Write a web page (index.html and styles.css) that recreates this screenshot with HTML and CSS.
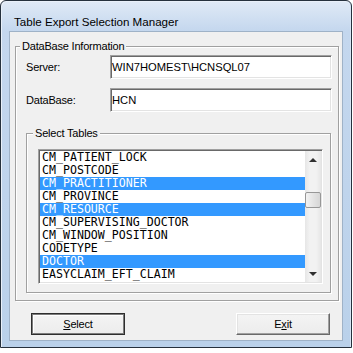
FILE: index.html
```html
<!DOCTYPE html>
<html lang="en">
<head>
    <meta charset="UTF-8">
    <title>Table Export Selection Manager</title>
    <link rel="stylesheet" href="styles.css">
</head>
<body>
    <div class="window">
        <div class="titlebar">Table Export Selection Manager</div>
        <div class="client">
            <div class="group group-db">
                <span class="group-title">DataBase Information</span>
                <div class="field field-server">
                    <label>Server:</label>
                    <div class="textbox">WIN7HOMEST\HCNSQL07</div>
                </div>
                <div class="field field-db">
                    <label>DataBase:</label>
                    <div class="textbox">HCN</div>
                </div>
                <div class="group group-tables">
                    <span class="group-title">Select Tables</span>
                    <div class="listbox">
                        <ul class="items">
                            <li>CM_PATIENT_LOCK</li>
                            <li>CM_POSTCODE</li>
                            <li class="selected">CM_PRACTITIONER</li>
                            <li>CM_PROVINCE</li>
                            <li class="selected">CM_RESOURCE</li>
                            <li>CM_SUPERVISING_DOCTOR</li>
                            <li>CM_WINDOW_POSITION</li>
                            <li>CODETYPE</li>
                            <li class="selected">DOCTOR</li>
                            <li>EASYCLAIM_EFT_CLAIM</li>
                        </ul>
                        <div class="scrollbar">
                            <div class="arrow"><span class="tri-up"></span></div>
                            <div class="track"><div class="thumb"></div></div>
                            <div class="arrow"><span class="tri-down"></span></div>
                        </div>
                    </div>
                </div>
            </div>
            <div class="buttons">
                <button class="btn btn-default"><u>S</u>elect</button>
                <button class="btn">E<u>x</u>it</button>
            </div>
        </div>
    </div>
</body>
</html>
```

FILE: styles.css
```css
body {
    margin: 0;
    background: #ffffff;
    font-family: "Liberation Sans", Arial, sans-serif;
}
.window {
    box-sizing: border-box;
    width: 352px;
    height: 348px;
    border: 1px solid #26313d;
    border-radius: 6px 6px 0 0;
    padding: 0 8px 6px 8px;
    background: linear-gradient(#e0eaf6, #c4d7ee 30px, #bad1ea);
    box-shadow: inset 1px 1px 0 #e9f0f9, inset -1px 0 0 #d6e3f2;
}
.titlebar {
    height: 30px;
    box-sizing: border-box;
    padding: 13px 0 0 5px;
    font-size: 11.6px;
    line-height: 15px;
    color: #000;
}
.client {
    box-sizing: border-box;
    height: 310px;
    border: 1px solid #9fb2c7;
    background: #f0f0f0;
    padding: 14px 3px 0 5px;
    font-size: 11px;
    letter-spacing: -0.2px;
    color: #000;
}
.group {
    box-sizing: border-box;
    border: 1px solid #a0a0a0;
    box-shadow: inset 1px 1px 0 #fff, 1px 1px 0 #fff;
}
.group-db {
    height: 255px;
}
.group-title {
    display: block;
    width: fit-content;
    margin: -7px 0 0 4px;
    padding: 0 2px;
    line-height: 13px;
    background: #f0f0f0;
}
.field {
    display: flex;
    align-items: center;
    margin: 0 6px 0 10px;
}
.field-server {
    margin-top: 2px;
}
.field-db {
    margin-top: 9px;
}
.field label {
    width: 84px;
}
.textbox {
    box-sizing: border-box;
    flex: 1;
    height: 24px;
    padding: 4px 0 0 1px;
    background: #fff;
    border: 1px solid;
    border-color: #a0a0a0 #fff #fff #a0a0a0;
    box-shadow: inset 1px 1px 0 #696969, inset -1px -1px 0 #e3e3e3;
    font-size: 11.2px;
    letter-spacing: 0;
    line-height: 14px;
}
.group-tables {
    height: 160px;
    margin: 21px 7px 0 10px;
}
.group-tables .group-title {
    margin-left: 6px;
}
.listbox {
    box-sizing: border-box;
    display: flex;
    width: 285px;
    height: 135px;
    margin: 9px 0 0 11px;
    background: #fff;
    border: 1px solid;
    border-color: #a0a0a0 #fff #fff #a0a0a0;
    box-shadow: inset 1px 1px 0 #696969, inset -1px -1px 0 #e3e3e3;
    padding: 1px;
}
.items {
    flex: 1;
    margin: 0;
    padding: 0;
    list-style: none;
    font-family: "DejaVu Sans Mono", monospace;
    font-size: 11.6px;
    letter-spacing: 0;
    line-height: 13px;
}
.items li {
    padding-left: 2px;
    height: 13px;
    white-space: nowrap;
    overflow: hidden;
}
.items li.selected {
    background: #3399ff;
    color: #fff;
}
.scrollbar {
    width: 16px;
    display: flex;
    flex-direction: column;
    background: linear-gradient(90deg, #e6e6e6, #f2f2f2 30%, #f2f2f2 70%, #e6e6e6);
}
.arrow {
    height: 17px;
    display: flex;
    align-items: center;
    justify-content: center;
}
.tri-up {
    border-left: 4px solid transparent;
    border-right: 4px solid transparent;
    border-bottom: 4px solid #303030;
}
.tri-down {
    border-left: 4px solid transparent;
    border-right: 4px solid transparent;
    border-top: 4px solid #303030;
}
.track {
    flex: 1;
}
.thumb {
    box-sizing: border-box;
    height: 16px;
    margin: 24px 0 0 0;
    border: 1px solid #979797;
    border-radius: 2px;
    background: linear-gradient(90deg, #f3f3f3, #e4e4e4 50%, #d6d6d6);
}
.buttons {
    display: flex;
    justify-content: space-between;
    margin: 12px 9px 0 16px;
}
.btn {
    box-sizing: border-box;
    width: 94px;
    height: 22px;
    padding: 0;
    background: linear-gradient(#f4f4f4, #ececec);
    border: 1px solid;
    border-color: #fff #696969 #696969 #fff;
    box-shadow: inset -1px -1px 0 #a0a0a0, inset 1px 1px 0 #e3e3e3;
    font-family: "Liberation Sans", Arial, sans-serif;
    font-size: 11px;
    letter-spacing: -0.2px;
    color: #000;
}
.btn-default {
    border: 1px solid #2e2e2e;
    box-shadow: inset 1px 1px 0 #7c7c7c, inset -1px -1px 0 #7c7c7c, inset 2px 2px 0 #fff;
}
```
